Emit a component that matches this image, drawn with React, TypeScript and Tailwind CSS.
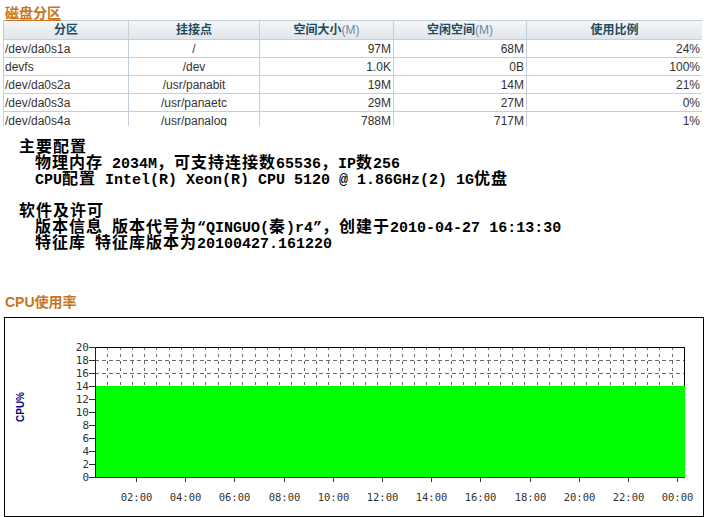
import React from 'react';

const rows = [
    ['/dev/da0s1a', '/', '97M', '68M', '24%'],
    ['devfs', '/dev', '1.0K', '0B', '100%'],
    ['/dev/da0s2a', '/usr/panabit', '19M', '14M', '21%'],
    ['/dev/da0s3a', '/usr/panaetc', '29M', '27M', '0%'],
    ['/dev/da0s4a', '/usr/panalog', '788M', '717M', '1%'],
];

// split a line so that CJK runs get the wider advance of the original bitmap font
const mixed = (s: string) =>
    s.split(/([\u3000-\u9fff\uff00-\uffef]+)/).map((part, i) =>
        /[\u3000-\u9fff\uff00-\uffef]/.test(part) ? (
            <span key={i} className="text-[16px] leading-[16px] tracking-[1px]">{part}</span>
        ) : (
            <span key={i}>{part}</span>
        )
    );

const CpuChart = () => {
    const x0 = 90;
    const x1 = 679;
    const yTop = 29;
    const yBot = 159;
    const unit = 6.5;
    const value = 14;
    const yVal = yBot - value * unit;
    const step = (x1 - x0) / 48;
    const ticks = ['02:00', '04:00', '06:00', '08:00', '10:00', '12:00', '14:00', '16:00', '18:00', '20:00', '22:00', '00:00'];

    return (
        <svg width="698" height="198" className="block">
            {/* grid above the fill */}
            {Array.from({ length: 47 }).map((_, i) => {
                const x = Math.round(x0 + step * (i + 1)) + 0.5;
                return <line key={i} x1={x} y1={yTop} x2={x} y2={yVal} stroke="#6b6b6b" strokeDasharray="3,4" />;
            })}
            {[16, 18].map((v) => (
                <line key={v} x1={x0} y1={yBot - v * unit + 0.5} x2={x1} y2={yBot - v * unit + 0.5} stroke="#6b6b6b" strokeDasharray="4,3" />
            ))}
            <rect x={x0 + 0.5} y={yTop + 0.5} width={x1 - x0} height={yBot - yTop} fill="none" stroke="#000" />
            <rect x={x0 + 1} y={yVal} width={x1 - x0} height={yBot - yVal} fill="#00ff00" />
            <line x1={x0 + 0.5} y1={yTop} x2={x0 + 0.5} y2={yBot + 1} stroke="#222" />
            <line x1={x0} y1={yBot + 0.5} x2={x1 + 1} y2={yBot + 0.5} stroke="#222" />

            {/* y axis */}
            {Array.from({ length: 11 }).map((_, i) => {
                const v = i * 2;
                const y = Math.round(yBot - v * unit);
                return (
                    <g key={v}>
                        <line x1={x0 - 6} y1={y + 0.5} x2={x0} y2={y + 0.5} stroke="#333" />
                        <text x={x0 - 6} y={y + 4} textAnchor="end" fontSize="11" fontFamily="'DejaVu Sans Mono', monospace" fill="#333">
                            {v}
                        </text>
                    </g>
                );
            })}

            {/* x axis */}
            {ticks.map((t, i) => {
                const x = Math.round(131 + 49.2 * i) + 0.5;
                return (
                    <g key={t}>
                        <line x1={x} y1={yBot} x2={x} y2={yBot + 5} stroke="#333" />
                        <text x={x} y={183} textAnchor="middle" fontSize="10.5" fontFamily="'DejaVu Sans Mono', monospace" fill="#333">
                            {t}
                        </text>
                    </g>
                );
            })}

            <text
                x={0}
                y={0}
                transform="translate(19 89) rotate(-90)"
                textAnchor="middle"
                fontSize="10"
                fontWeight="bold"
                fontFamily="'Liberation Sans', Arial, sans-serif"
                fill="#000080"
            >
                CPU%
            </text>
        </svg>
    );
};

export default function App() {
    return (
        <div className="w-[727px] h-[517px] bg-white overflow-hidden font-['Liberation_Sans','Noto_Sans_CJK_SC',sans-serif]">
            {/*------------------------------- Disk partitions ------------------------------- */}
            <div className="h-[20px] pl-[5px] pt-[1px]">
                <span className="text-[14px] leading-[16px] font-bold text-[#c8741c] underline underline-offset-[2px]">磁盘分区</span>
            </div>

            <div className="ml-[3px] w-[699px] h-[106px] overflow-hidden">
                <table className="w-[699px] table-fixed border-collapse text-[12px] leading-[14px] text-[#333]">
                    <colgroup>
                        <col className="w-[125px]" />
                        <col className="w-[131px]" />
                        <col className="w-[134px]" />
                        <col className="w-[133px]" />
                        <col className="w-[176px]" />
                    </colgroup>
                    <thead>
                        <tr className="h-[19px] bg-gradient-to-b from-[#f5f6f7] to-[#e0e5ea] text-[#1b4c62]">
                            <th className="border border-[#c3cfdb] font-bold p-0">分区</th>
                            <th className="border border-[#c3cfdb] font-bold p-0">挂接点</th>
                            <th className="border border-[#c3cfdb] font-bold p-0">
                                空间大小<span className="font-normal text-[#6d8aa6]">(M)</span>
                            </th>
                            <th className="border border-[#c3cfdb] font-bold p-0">
                                空闲空间<span className="font-normal text-[#6d8aa6]">(M)</span>
                            </th>
                            <th className="border border-[#c3cfdb] font-bold p-0">使用比例</th>
                        </tr>
                    </thead>
                    <tbody>
                        {rows.map((r) => (
                            <tr key={r[0] + r[1]} className="h-[18px]">
                                <td className="border border-[#c3cfdb] px-[1px] py-0 text-left">{r[0]}</td>
                                <td className="border border-[#c3cfdb] px-[1px] py-0 text-center">{r[1]}</td>
                                <td className="border border-[#c3cfdb] px-[2px] py-0 text-right">{r[2]}</td>
                                <td className="border border-[#c3cfdb] px-[2px] py-0 text-right">{r[3]}</td>
                                <td className="border border-[#c3cfdb] px-[2px] py-0 text-right">{r[4]}</td>
                            </tr>
                        ))}
                    </tbody>
                </table>
            </div>

            {/*------------------------------- System info ------------------------------- */}
            <div className="pt-[14px] font-['Liberation_Mono','Noto_Sans_CJK_SC',monospace] font-bold text-[15px] leading-[16px] text-black whitespace-pre">
                <div className="h-[16px] pl-[19px]">{mixed('主要配置')}</div>
                <div className="h-[16px] pl-[35px]">{mixed('物理内存 2034M，可支持连接数65536，IP数256')}</div>
                <div className="h-[16px] pl-[35px]">{mixed('CPU配置 Intel(R) Xeon(R) CPU 5120 @ 1.86GHz(2) 1G优盘')}</div>
                <div className="h-[16px] pl-[19px] mt-[16px]">{mixed('软件及许可')}</div>
                <div className="h-[16px] pl-[35px]">{mixed('版本信息 版本代号为“QINGUO(秦)r4”，创建于2010-04-27 16:13:30')}</div>
                <div className="h-[16px] pl-[35px]">{mixed('特征库 特征库版本为20100427.161220')}</div>
            </div>

            {/*------------------------------- CPU usage ------------------------------- */}
            <div className="mt-[42px] h-[16px] pl-[5px] text-[14px] leading-[16px] font-bold text-[#c8741c]">CPU使用率</div>

            <div className="mt-[7px] ml-[4px] w-[700px] h-[200px] border border-black">
                <CpuChart />
            </div>
        </div>
    );
}
